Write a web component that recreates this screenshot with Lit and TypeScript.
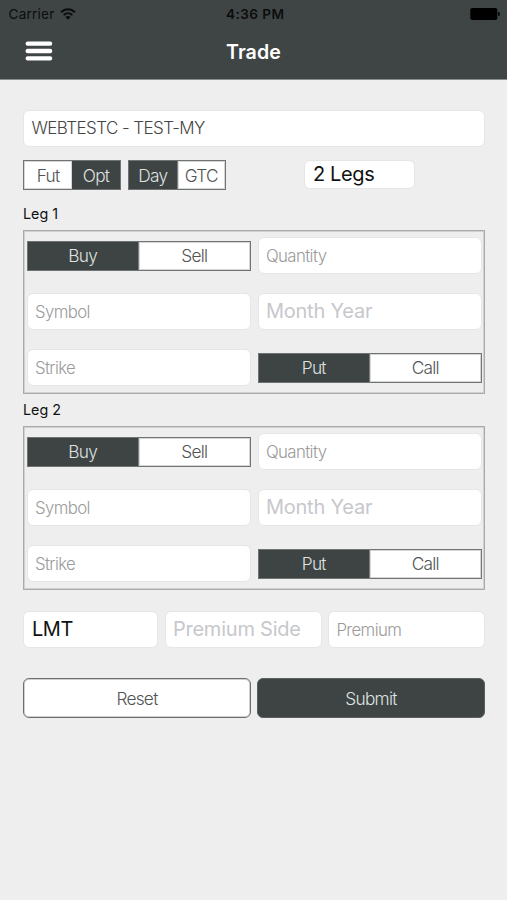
import { LitElement, html, css } from "lit";
import { customElement, property } from "lit/decorators.js";
import { classMap } from "lit/directives/class-map.js";

@customElement("segmented-control")
class SegmentedControl extends LitElement {
  @property({ type: Array }) options: string[] = [];
  @property({ type: Number }) selected = 0;

  static styles = css`
    :host {
      display: flex;
      box-sizing: border-box;
      height: 30px;
      border: 1px solid #6f7373;
      background: #fff;
    }
    .segment {
      flex: 1 1 0;
      display: flex;
      align-items: center;
      justify-content: center;
      font-weight: 300;
      font-size: 17.3px;
      letter-spacing: -0.75px;
      color: #505454;
      white-space: nowrap;
      box-shadow: inset 0 0 0 1px rgba(62, 68, 67, 0.22);
    }
    .active {
      background: #3e4443;
      color: #dfe2e2;
    }
    .segment + .segment:not(.active) {
      border-left: 1px solid #7b7f7f;
    }
  `;

  render() {
    return this.options.map(
      (label, i) => html`<div class=${classMap({ segment: true, active: i === this.selected })}>${label}</div>`
    );
  }
}

@customElement("form-field")
class FormField extends LitElement {
  @property() text = "";
  @property() kind = "light-hint";

  static styles = css`
    :host {
      display: flex;
      box-sizing: border-box;
      height: 37px;
      min-width: 0;
      border: 1px solid #e6e6e6;
      border-radius: 6px;
      background: #fff;
      align-items: center;
      padding-left: 7.4px;
      white-space: nowrap;
    }
    .light-hint {
      font-weight: 300;
      font-size: 16.8px;
      letter-spacing: -0.6px;
      color: #9b9b9b;
    }
    .light-value {
      font-weight: 300;
      font-size: 17px;
      letter-spacing: -0.58px;
      color: #454545;
      margin-top: -1px;
    }
    .hint {
      font-size: 20px;
      letter-spacing: -0.22px;
      color: #c7c7cc;
      margin-top: -1px;
    }
    .value {
      font-size: 20px;
      letter-spacing: -0.35px;
      color: #111;
      margin-top: -1px;
      padding-left: 0.5px;
    }
  `;

  render() {
    return html`<span class=${this.kind}>${this.text}</span>`;
  }
}

@customElement("leg-panel")
class LegPanel extends LitElement {
  @property() label = "";

  static styles = css`
    :host {
      display: block;
      height: 196px;
    }
    .label {
      height: 33px;
      line-height: 33px;
      font-size: 14.3px;
      letter-spacing: 0;
      color: #111;
    }
    .panel {
      box-sizing: border-box;
      height: 163.5px;
      border: 1px solid #a9abab;
      box-shadow: inset 0 0 0 1px rgba(120, 124, 124, 0.25);
      padding: 6px 3px 0 2.5px;
      display: grid;
      grid-template-columns: 224px 224px;
      grid-template-rows: 37px 37px 37px;
      column-gap: 7px;
      row-gap: 19px;
      align-items: center;
    }
  `;

  render() {
    return html`
      <div class="label">${this.label}</div>
      <div class="panel">
        <segmented-control .options=${["Buy", "Sell"]}></segmented-control>
        <form-field text="Quantity"></form-field>
        <form-field text="Symbol"></form-field>
        <form-field text="Month Year" kind="hint"></form-field>
        <form-field text="Strike"></form-field>
        <segmented-control .options=${["Put", "Call"]}></segmented-control>
      </div>
    `;
  }
}

@customElement("app-root")
class AppRoot extends LitElement {
  static styles = css`
    :host {
      display: block;
      box-sizing: border-box;
      height: 900px;
      overflow: hidden;
      background: #eee;
      font-family: Inter, "Liberation Sans", sans-serif;
    }
    header {
      box-sizing: border-box;
      height: 80px;
      background: #3f4544;
      border-bottom: 1px solid #8b8e8e;
    }
    .status {
      display: grid;
      grid-template-columns: 1fr auto 1fr;
      align-items: center;
      height: 27px;
      padding: 0 7px 0 8.5px;
      color: #0b0d0d;
      font-size: 13.6px;
    }
    .carrier {
      display: flex;
      align-items: center;
      gap: 6px;
      letter-spacing: 0.2px;
    }
    .time {
      font-weight: 600;
      letter-spacing: 0.45px;
      padding-left: 2px;
    }
    .battery {
      justify-self: end;
    }
    svg {
      display: block;
    }
    .nav {
      display: grid;
      grid-template-columns: 1fr auto 1fr;
      align-items: center;
      height: 50px;
      padding: 0 25px;
    }
    .title {
      font-weight: 600;
      font-size: 19.6px;
      letter-spacing: 0.1px;
      color: #fff;
    }
    main {
      padding: 30px 22px 0 23px;
    }
    .modes {
      display: flex;
      margin-top: 13px;
      height: 30px;
    }
    .modes segmented-control {
      width: 98px;
      margin-right: 7px;
    }
    .legs {
      width: 111px;
      height: 29px;
      margin-left: 71px;
    }
    .legs-list {
      margin-top: 7px;
    }
    .order {
      display: grid;
      grid-template-columns: 135px 157px 157px;
      justify-content: space-between;
      margin-top: 22px;
    }
    .actions {
      display: grid;
      grid-template-columns: 228px 228px;
      justify-content: space-between;
      margin-top: 30px;
    }
    .button {
      box-sizing: border-box;
      height: 40px;
      border: 1px solid #6a6e6e;
      border-radius: 6px;
      background: #fff;
      box-shadow: inset 0 0 0 1px rgba(62, 68, 67, 0.25);
      color: #505454;
      font: inherit;
      font-weight: 300;
      font-size: 17.3px;
      letter-spacing: -0.75px;
      padding: 1px 0 0;
    }
    .primary {
      background: #3e4443;
      border-color: #5a5f5f;
      color: #dfe2e2;
    }
  `;

  render() {
    return html`
      <header>
        <div class="status">
          <div class="carrier">
            <span>Carrier</span>
            <svg width="16" height="12" viewBox="0 0 16 12" fill="none" stroke="#0b0d0d" stroke-width="2">
              <path d="M1 4.4C5 .3 11 .3 15 4.4" />
              <path d="M3.7 7.1c2.5-2.4 6.1-2.4 8.6 0" />
              <path d="M8 11.7 5.4 9.1c1.5-1.4 3.7-1.4 5.2 0z" fill="#0b0d0d" stroke="none" />
            </svg>
          </div>
          <div class="time">4:36 PM</div>
          <svg class="battery" width="30" height="12" viewBox="0 0 30 12" fill="#000">
            <rect x="0.3" y="0" width="27" height="12" rx="1.8" />
            <path d="M28.2 4h.4a1.2 1.2 0 0 1 1.2 1.2v1.6A1.2 1.2 0 0 1 28.6 8h-.4z" />
          </svg>
        </div>
        <div class="nav">
          <svg width="28" height="22" viewBox="0 0 28 22" fill="#fff">
            <rect x="0.6" y="0.4" width="26.6" height="4.4" rx="2" />
            <rect x="0.6" y="7.8" width="26.6" height="4.4" rx="2" />
            <rect x="0.6" y="15.2" width="26.6" height="4.4" rx="2" />
          </svg>
          <div class="title">Trade</div>
        </div>
      </header>
      <main>
        <form-field text="WEBTESTC - TEST-MY" kind="light-value"></form-field>
        <div class="modes">
          <segmented-control .options=${["Fut", "Opt"]} .selected=${1}></segmented-control>
          <segmented-control .options=${["Day", "GTC"]}></segmented-control>
          <form-field class="legs" text="2 Legs" kind="value"></form-field>
        </div>
        <div class="legs-list">
          <leg-panel label="Leg 1"></leg-panel>
          <leg-panel label="Leg 2"></leg-panel>
        </div>
        <div class="order">
          <form-field text="LMT" kind="value"></form-field>
          <form-field text="Premium Side" kind="hint"></form-field>
          <form-field text="Premium"></form-field>
        </div>
        <div class="actions">
          <button class="button">Reset</button>
          <button class="button primary">Submit</button>
        </div>
      </main>
    `;
  }
}
